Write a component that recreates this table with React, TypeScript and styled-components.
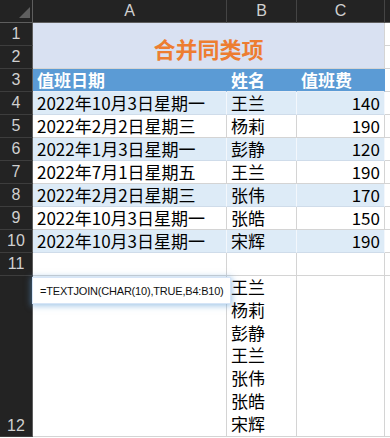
import React from "react";
import styled, { createGlobalStyle } from "styled-components";

const Global = createGlobalStyle`
  html, body { margin: 0; padding: 0; background: #fff; overflow: hidden; }
  body { font-family: "Noto Sans CJK SC", "Noto Sans", sans-serif; }
`;

const Sheet = styled.div`
  position: relative;
  display: grid;
  grid-template-columns: 33px 194px 70px 88px 1fr;
  grid-template-rows: 23px repeat(11, 23px) 161px;
  width: 390px;
  height: 438px;
  overflow: hidden;
  background: #fff;
`;

const Corner = styled.div`
  box-sizing: border-box;
  background: #232323;
  border-right: 1px solid #5e5e5e;
  border-bottom: 1px solid #5e5e5e;
  display: flex;
  align-items: flex-end;
  justify-content: flex-end;
  padding: 0 1px 3px 0;
`;

const ColHead = styled.div`
  box-sizing: border-box;
  background: #232323;
  color: #d0d0d0;
  font-family: "Liberation Sans", sans-serif;
  font-size: 16px;
  display: flex;
  align-items: center;
  justify-content: center;
  border-right: 1px solid #444;
  border-bottom: 1px solid #5e5e5e;
`;

const RowHead = styled.div<{ $tall?: boolean }>`
  box-sizing: border-box;
  background: #232323;
  color: #d0d0d0;
  font-family: "Liberation Sans", sans-serif;
  font-size: 16px;
  display: flex;
  justify-content: center;
  align-items: ${(p) => (p.$tall ? "flex-end" : "center")};
  padding-bottom: ${(p) => (p.$tall ? "1px" : "0")};
  border-right: 1px solid #5e5e5e;
  border-bottom: 1px solid #3d3d3d;
`;

type Tone = "plain" | "band" | "head";

const tones: Record<Tone, { bg: string; right: string; bottom: string; color: string }> = {
  plain: { bg: "#ffffff", right: "#d4d4d4", bottom: "#d4d4d4", color: "#000" },
  band: { bg: "#DDEBF7", right: "#f3f7fc", bottom: "#cfdcea", color: "#000" },
  head: { bg: "#5B9BD5", right: "#5B9BD5", bottom: "#e8eef6", color: "#fff" },
};

const Cell = styled.div<{ $tone?: Tone; $align?: "left" | "right" }>`
  box-sizing: border-box;
  background: ${(p) => tones[p.$tone || "plain"].bg};
  color: ${(p) => tones[p.$tone || "plain"].color};
  border-right: 1px solid ${(p) => tones[p.$tone || "plain"].right};
  border-bottom: 1px solid ${(p) => tones[p.$tone || "plain"].bottom};
  font-size: 17px;
  font-weight: ${(p) => (p.$tone === "head" ? 700 : 400)};
  line-height: 22px;
  padding: 0 4px;
  text-align: ${(p) => p.$align || "left"};
  white-space: nowrap;
`;

const TitleCell = styled.div`
  box-sizing: border-box;
  grid-column: span 3;
  grid-row: span 2;
  background: #D9E1F2;
  border-right: 1px solid #d4d4d4;
  border-bottom: 1px solid #d4d4d4;
  color: #ED7D31;
  font-size: 22px;
  font-weight: 700;
  display: flex;
  align-items: center;
  justify-content: center;
  padding: 4px 0 0 0;
`;

const Lines = styled.div`
  box-sizing: border-box;
  border-right: 1px solid #d4d4d4;
  border-bottom: 1px solid #d4d4d4;
  font-size: 17px;
  line-height: 22.8px;
  padding: 0 4px;
  white-space: pre-line;
  color: #000;
`;

const Tip = styled.div`
  position: absolute;
  left: 32px;
  top: 277px;
  width: 199px;
  height: 27px;
  box-sizing: border-box;
  background: #fff;
  border: 1px solid #d6e5f7;
  box-shadow: 0 1px 6px 1px rgba(91, 155, 213, 0.55);
  font-family: "Liberation Sans", sans-serif;
  font-size: 11px;
  letter-spacing: -0.2px;
  color: #111;
  display: flex;
  align-items: center;
  padding-left: 7px;
`;

const data: [string, string, string][] = [
  ["2022年10月3日星期一", "王兰", "140"],
  ["2022年2月2日星期三", "杨莉", "190"],
  ["2022年1月3日星期一", "彭静", "120"],
  ["2022年7月1日星期五", "王兰", "190"],
  ["2022年2月2日星期三", "张伟", "170"],
  ["2022年10月3日星期一", "张皓", "150"],
  ["2022年10月3日星期一", "宋辉", "190"],
];

export default function App() {
  return (
    <>
      <Global />
      <Sheet>
        <Corner>
          <svg width="12" height="12" viewBox="0 0 12 12">
            <polygon points="11,0 11,11 0,11" fill="#5f5f5f" />
          </svg>
        </Corner>
        <ColHead>A</ColHead>
        <ColHead>B</ColHead>
        <ColHead>C</ColHead>
        <ColHead />

        <RowHead>1</RowHead>
        <TitleCell>合并同类项</TitleCell>
        <Cell />
        <RowHead>2</RowHead>
        <Cell />

        <RowHead>3</RowHead>
        <Cell $tone="head">值班日期</Cell>
        <Cell $tone="head">姓名</Cell>
        <Cell $tone="head">值班费</Cell>
        <Cell />

        {data.map(([d, n, v], i) => {
          const tone: Tone = i % 2 === 0 ? "band" : "plain";
          return (
            <React.Fragment key={i}>
              <RowHead>{i + 4}</RowHead>
              <Cell $tone={tone}>{d}</Cell>
              <Cell $tone={tone}>{n}</Cell>
              <Cell $tone={tone} $align="right">{v}</Cell>
              <Cell />
            </React.Fragment>
          );
        })}

        <RowHead>11</RowHead>
        <Cell />
        <Cell />
        <Cell />
        <Cell />

        <RowHead $tall>12</RowHead>
        <Cell />
        <Lines>{data.map((r) => r[1]).join("\n")}</Lines>
        <Cell />
        <Cell />

        <Tip>=TEXTJOIN(CHAR(10),TRUE,B4:B10)</Tip>
      </Sheet>
    </>
  );
}
